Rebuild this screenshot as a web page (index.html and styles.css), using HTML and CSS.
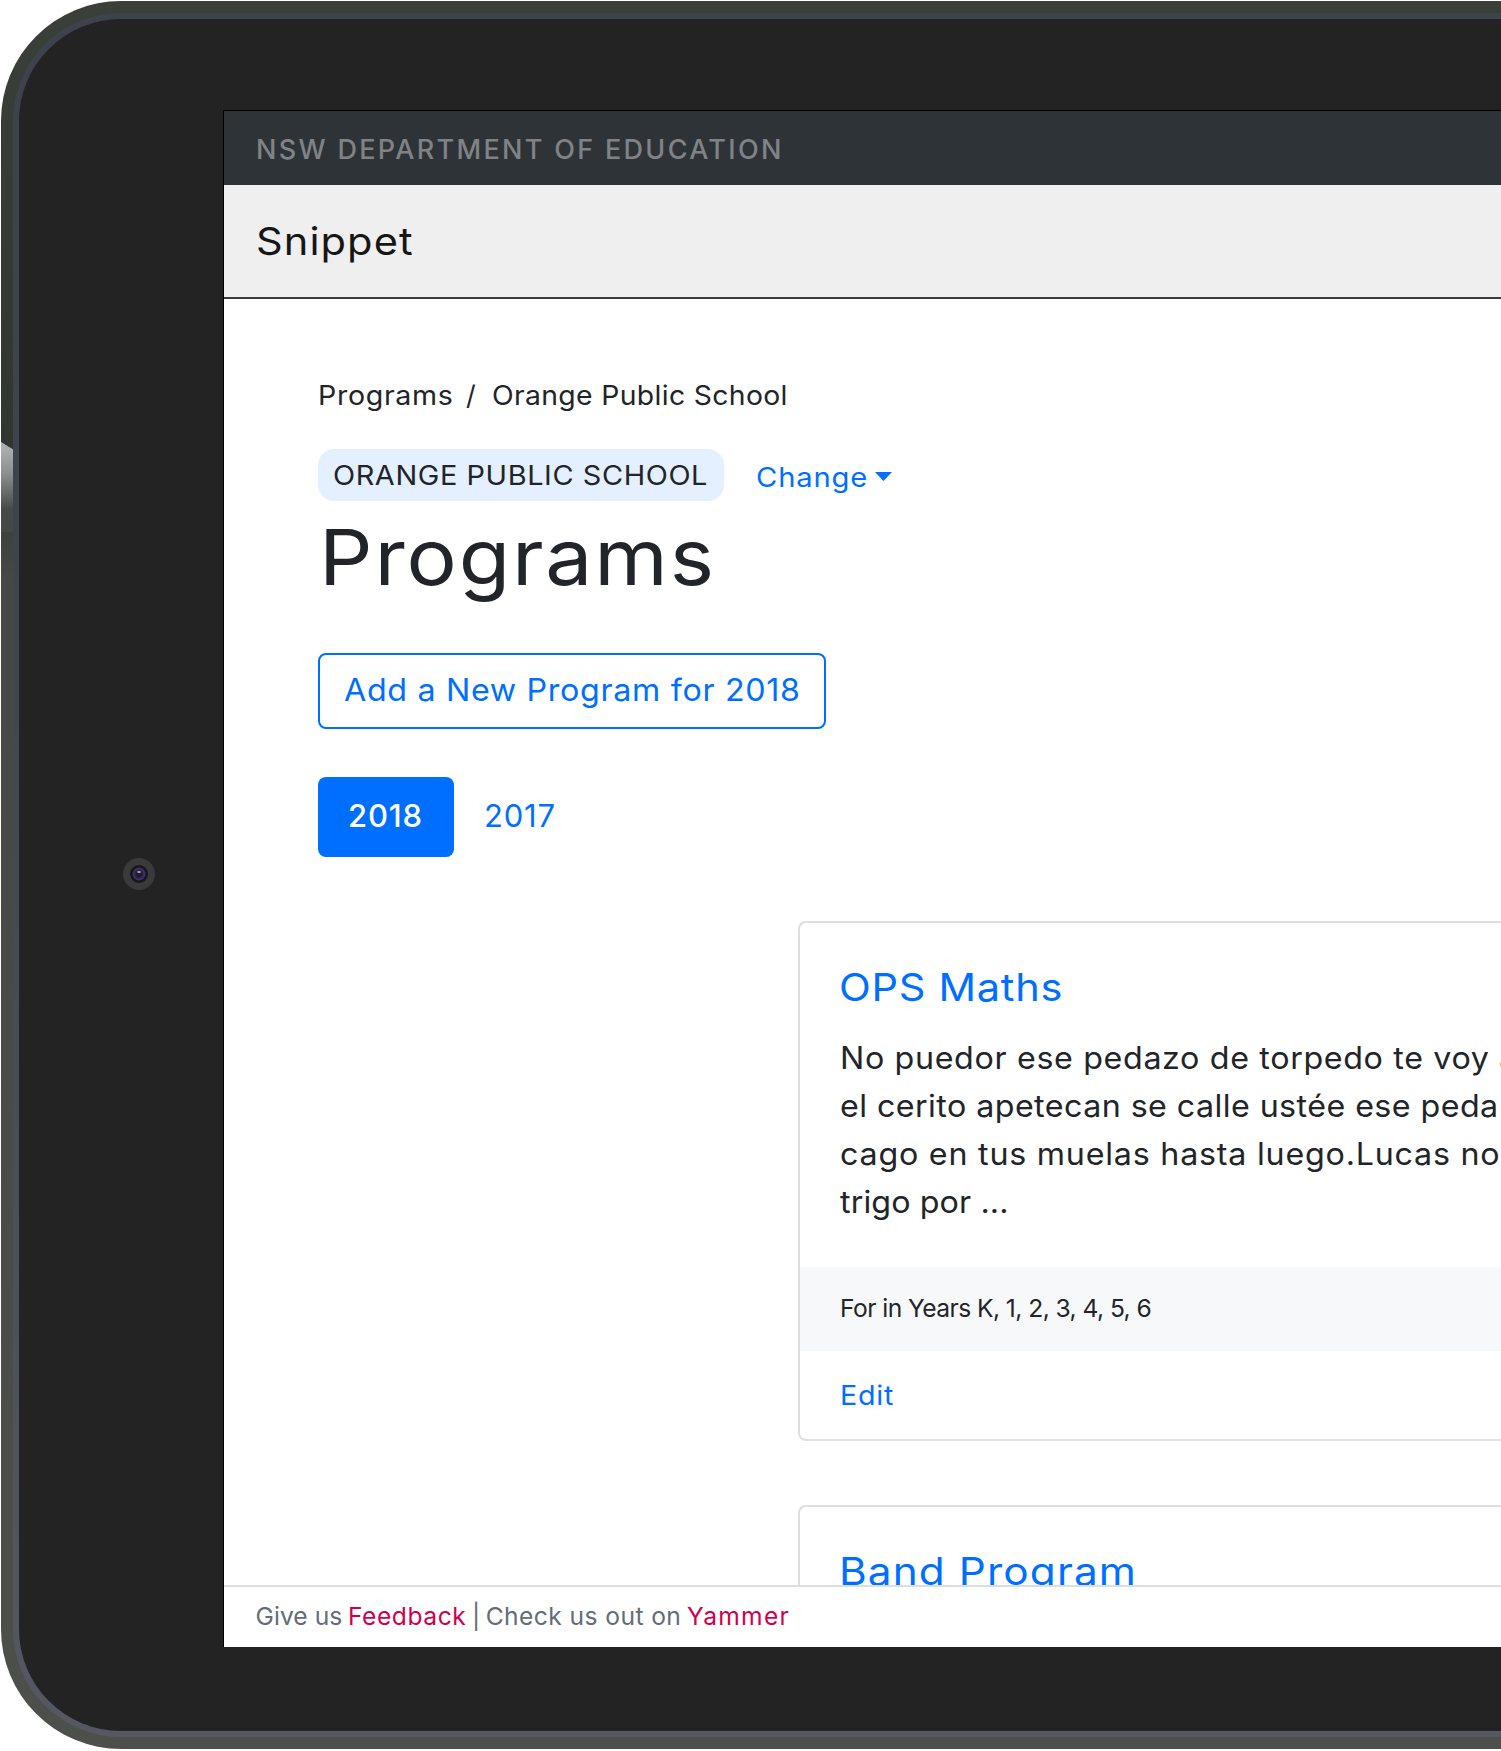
FILE: index.html
```html
<!DOCTYPE html>
<html lang="en">
<head>
<meta charset="utf-8">
<title>Snippet</title>
<link rel="stylesheet" href="styles.css">
</head>
<body>
<div class="device">
  <div class="shine"></div>
  <div class="bezel">
    <svg class="camera" viewBox="0 0 32 32"><circle cx="16" cy="16" r="16" fill="#3a3a3b"/><circle cx="16" cy="16" r="9" fill="#17161b"/><circle cx="16" cy="16" r="5.5" fill="#2a2144" stroke="#3e3165" stroke-width="2"/><circle cx="16" cy="16" r="3" fill="#211c30"/><ellipse cx="16" cy="14" rx="2" ry="1" fill="#a9a6b4"/></svg>
    <div class="screen">
      <header class="dept">NSW DEPARTMENT OF EDUCATION</header>
      <div class="brand"><span class="wide brand-name">Snippet</span></div>
      <main class="content">
        <nav class="crumbs"><a class="wide crumb-root">Programs</a><span>/</span><a class="wide crumb-school">Orange Public School</a></nav>
        <div class="school"><span class="badge"><span class="wide badge-text">ORANGE PUBLIC SCHOOL</span></span><a class="change"><span class="wide change-text">Change</span><svg class="caret" viewBox="0 0 17 9"><path d="M0 0h17L8.500 9z" fill="currentColor"/></svg></a></div>
        <h1 class="title"><span class="wide title-text">Programs</span></h1>
        <a class="add"><span class="wide add-text">Add a New Program for 2018</span></a>
        <div class="years"><a class="year active">2018</a><a class="year">2017</a></div>
        <section class="cards">
          <article class="card">
            <h2><span class="wide name-maths">OPS Maths</span></h2>
            <p><span class="wide line1">No puedor ese pedazo de torpedo te voy a</span><br><span class="wide line2">el cerito apetecan se calle ustée ese peda</span><br><span class="wide line3">cago en tus muelas hasta luego.Lucas no</span><br><span class="wide line4">trigo por ...</span></p>
            <div class="for">For in Years K, 1, 2, 3, 4, 5, 6</div>
            <div class="edit"><a class="wide edit-text">Edit</a></div>
          </article>
          <article class="card"><h2><span class="wide name-band">Band Program</span></h2></article>
        </section>
      </main>
      <footer class="foot"><span class="give">Give us</span><a class="feedback">Feedback</a><span>|</span><span class="check">Check us out on</span><a class="yammer">Yammer</a></footer>
    </div>
  </div>
</div>
</body>
</html>
```
FILE: styles.css
```css
* { box-sizing: border-box; }
body { margin: 0; width: 1501px; height: 1751px; overflow: hidden; background: #fff; font: 400 27px/42px Inter, sans-serif; color: #212529; }

/* Tablet frame, running off the right edge */
.device { position: relative; height: 1748px; margin: 1px 0 0 1px; padding: 12px 0 12px 12px; border-radius: 120px 0 0 120px; background: linear-gradient(#3b3f3a, #303630 25%, #454844 33%, #4d4f4b); }
.shine { position: absolute; left: 0; top: 441px; width: 13px; height: 90px; background: linear-gradient(#b4b7b7, #8c8f8f 35%, #454947 75%, #454844); clip-path: polygon(0 0, 100% 8px, 100% 100%, 0 100%); }
.bezel { position: relative; height: 1724px; padding: 5px 0 5px 5px; border-radius: 108px 0 0 108px; background: linear-gradient(#3e424d, #3e434d 30%, #555863); }
.bezel::before { content: ""; position: absolute; inset: 6px 0 6px 6px; border-radius: 102px 0 0 102px; background: #232323; }
.camera { position: absolute; left: 109.5px; top: 844.5px; width: 32px; height: 32px; }
.screen { position: relative; display: flex; flex-direction: column; height: 1537px; margin: 92px 0 0 205px; background: #fff; border: solid #000; border-width: 1px 0 0 1px; overflow: hidden; }

/* Letterforms drawn slightly extended */
.wide { display: inline-block; transform-origin: 0 50%; white-space: nowrap; }

.dept { height: 74px; display: flex; align-items: center; padding: 4px 0 0 32px; background: #2e3337; color: #808386; font-weight: 500; letter-spacing: 2.31px; white-space: nowrap; }
.brand { height: 114px; display: flex; align-items: center; padding-left: 32px; background: #efefef; border-bottom: 2px solid #3a3a3a; color: #161616; font-size: 38.5px; }
.brand-name { transform: scaleX(1.08); letter-spacing: 1px; }

.content { flex: 1; min-height: 0; overflow: hidden; padding: 76px 0 0 94px; }
.crumbs { display: grid; grid-template-columns: 148px 26px auto; }
.crumb-root { transform: scaleX(1.06); letter-spacing: .62px; }
.crumb-school { transform: scaleX(1.05); letter-spacing: .32px; }
.school { display: flex; margin-top: 32px; }
.badge { display: flex; align-items: center; width: 406px; height: 52px; padding: 2px 0 0 15px; border-radius: 16px; background: #e4f0ff; }
.badge-text { transform: scaleX(1.07); letter-spacing: .55px; }
.change { display: flex; align-items: center; padding-top: 5px; margin-left: 32px; color: #006fff; }
.change-text { width: 118.5px; transform: scaleX(1.08); letter-spacing: .8px; }
.caret { width: 17px; height: 9px; margin-bottom: 2px; }
.title { margin: 8px 0 0 1px; font: 400 77px/96px Inter, sans-serif; }
.title-text { transform: scaleX(1.09); letter-spacing: 1.68px; }
.add { display: flex; align-items: center; width: 508px; height: 76px; margin-top: 48px; padding: 0 0 2px 24px; border: 2px solid #006fff; border-radius: 8px; color: #006fff; font-size: 31px; }
.add-text { transform: scaleX(1.04); letter-spacing: .64px; }
.years { display: flex; margin-top: 48px; font-size: 31px; letter-spacing: .8px; }
.year { display: flex; align-items: center; height: 80px; padding: 0 30px 2px; color: #006fff; border-radius: 8px; }
.active { width: 136px; background: #006fff; color: #fff; font-weight: 500; }

.cards { margin: 64px 0 0 480px; }
.card { margin-bottom: 64px; border: 2px solid #dfdfdf; border-right: 0; border-radius: 8px 0 0 8px; padding-top: 40px; overflow: hidden; }
.card h2 { margin: 0 0 23px; padding-left: 39px; font: 400 38.5px/48px Inter, sans-serif; color: #006fff; }
.name-maths { transform: scaleX(1.08); letter-spacing: .65px; }
.name-band { transform: scaleX(1.1); letter-spacing: 1px; }
.card p { margin: 0 0 41px; padding-left: 39.5px; font-size: 31px; line-height: 48px; white-space: nowrap; }
.card p .wide { transform: scaleX(1.04); vertical-align: top; }
.line1 { letter-spacing: .614px; }
.line2 { letter-spacing: .407px; }
.line3 { letter-spacing: .74px; }
.line4 { letter-spacing: .09px; }
.for { display: flex; align-items: center; height: 84px; padding: 0 0 2px 40px; background: #f7f8fa; font-size: 24.6px; letter-spacing: -.556px; }
.edit { display: flex; align-items: center; height: 88px; padding: 2px 0 0 39.5px; color: #006fff; }
.edit-text { transform: scaleX(1.06); letter-spacing: .76px; }

.foot { display: flex; align-items: center; gap: 5.6px; height: 62px; padding: 0 0 2px 31.5px; border-top: 2px solid #dadfe3; font-size: 24.6px; color: #626d76; white-space: nowrap; }
.foot a { color: #d1004f; }
.give { letter-spacing: .06px; }
.feedback { letter-spacing: .55px; }
.check { letter-spacing: .425px; }
.foot .yammer { letter-spacing: 1.28px; }
```
